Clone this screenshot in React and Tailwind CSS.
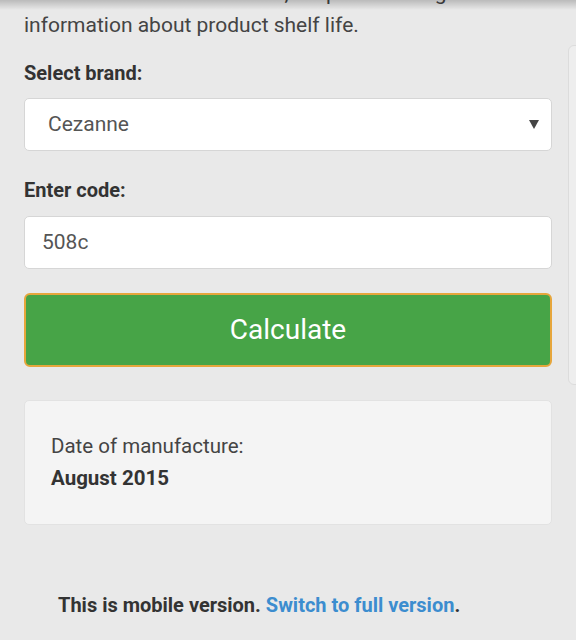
import React from 'react';

const Field = ({ children, className = '' }) => (
    <div className={`h-[53px] bg-white border border-[#d6d6d6] rounded-[5px] flex items-center text-[21px] text-[#555] ${className}`}>
        {children}
    </div>
);

export default function App() {
    return (
        <div className="relative min-h-[640px] bg-[#e9e9e9] overflow-hidden font-['Roboto',sans-serif] text-[#333]">
            <div className="absolute top-0 inset-x-0 h-[10px] bg-gradient-to-b from-black/20 to-transparent z-10" />

            <div className="flex w-[900px]">
                <main className="w-[568px] shrink-0 pl-6 pr-4">
                    <p className="mt-[-23px] text-[21px] leading-[32px] text-[#444]">
                        Select brand and enter code, we provide the general
                        <br />
                        information about product shelf life.
                    </p>

                    <label className="block mt-[17px] mb-[10px] text-[20px] leading-[30px] font-bold text-[#333]">Select brand:</label>
                    <Field className="pl-[23px] pr-[11px] justify-between">
                        <span>Cezanne</span>
                        <svg width="10" height="9" viewBox="0 0 10 9" className="mr-[1px]">
                            <path d="M0 0 H10 L5 9 Z" fill="#444" />
                        </svg>
                    </Field>

                    <label className="block mt-[24px] mb-[11px] text-[20px] leading-[30px] font-bold text-[#333]">Enter code:</label>
                    <Field className="pl-[17px]">
                        <span>508c</span>
                    </Field>

                    <button className="mt-[24px] w-full h-[74px] bg-[#47a447] border-2 border-[#e6a63c] rounded-[6px] text-white text-[28px] leading-none flex items-center justify-center">
                        Calculate
                    </button>

                    <div className="mt-[33px] bg-[#f4f4f4] border border-[#e2e2e2] rounded-[5px] px-[26px] pt-[29px] pb-[30px] text-[20.5px] leading-[32px] text-[#444]">
                        <div>Date of manufacture:</div>
                        <div className="font-bold text-[#333]">August 2015</div>
                    </div>

                    <div className="mt-[65px] pl-[34px] text-[20px] leading-[30px] font-bold text-[#333] whitespace-nowrap">
                        This is mobile version. <a href="#" className="text-[#3c8dcf]">Switch to full version</a>.
                    </div>
                </main>

                <aside className="w-[300px] shrink-0 mt-[45px] h-[340px] bg-[#eeeeee] border border-[#dcdcdc] rounded-[6px]" />
            </div>
        </div>
    );
}
